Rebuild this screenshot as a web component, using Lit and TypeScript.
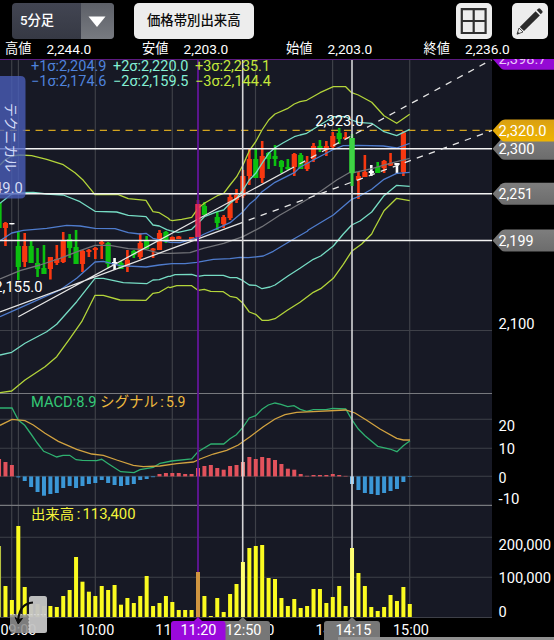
import { LitElement, html, svg, css } from "lit";
import { customElement } from "lit/decorators.js";

const barX = (i: number) => 18.3 + 6.418 * i;

// Line tracks are stored per tile: an origin, then x,y pairs in thirds of a pixel.
type Tile = [number, number, string];
const track = (tiles: Tile[]) =>
  tiles
    .flatMap(([ox, oy, s]) =>
      s.split(" ").map((p) => {
        const [x, y] = p.split(",").map(Number);
        return `${(ox + x / 3).toFixed(1)},${(oy + y / 3).toFixed(1)}`;
      })
    )
    .join(" ");

const BLUE = "#4f7ccd";
const MINT = "#76dcc4";
const LIME = "#b3d43a";

const BANDS: { color: string; tiles: Tile[] }[] = [
  { color: "#737479", tiles: [
    [0, 200, "0,237 60,212 120,195 180,175 240,152 285,136 330,136 385,146 438,149 480,160"],
    [170, 100, "0,460 60,458 100,445 161,430 219,410 276,380 330,345 400,305 450,275 500,240 540,217"],
    [300, 80, "155,279 175,275 215,266 270,250 329,235"]] },
  { color: BLUE, tiles: [
    [0, 200, "0,122 35,99 70,91 140,85 200,76 240,78 285,85 345,86 385,98 420,102 438,100 459,115"],
    [170, 100, "0,427 30,428 65,418 84,412 103,402 142,385 180,368 219,335 238,313 257,297 276,275 315,247 373,218"],
    [300, 80, "0,262 40,240 97,210 130,197 175,196 250,198 290,204 329,190"]] },
  { color: BLUE, tiles: [
    [0, 200, "0,350 90,310 180,270 230,235 285,186 310,184 360,197 438,201 478,195 516,191 555,191"],
    [170, 220, "80,127 130,118 180,116 210,112 235,113 280,108 310,94 370,58 412,34"],
    [300, 80, "25,450 100,405 155,358 175,350 215,328 252,298 290,280 329,277"]] },
  { color: MINT, tiles: [
    [0, 60, "0,430 35,402 55,398 100,397 140,402 190,405 240,425 285,454 350,456 385,466 438,470"],
    [0, 200, "459,75 478,78 500,89"],
    [170, 100, "0,392 25,397 65,388 84,370 103,350 142,335 161,330 180,310 200,295 219,270 238,240 257,220 276,190 296,160 315,143 340,128 373,110"],
    [300, 80, "0,165 20,160 60,135 100,110 137,110 155,120 175,127 215,130 252,155 290,167 329,148"]] },
  { color: MINT, tiles: [
    [0, 200, "0,465 35,457 75,430 140,395 170,373 230,305 285,235 310,235 370,248 440,251 459,240 478,239 505,229"],
    [170, 220, "0,169 15,164 65,163 84,169 103,166 160,166 180,173 200,173 219,182 238,195 257,196 276,206 300,201 315,195 355,167 390,145 430,118 452,108 490,78 520,42"],
    [300, 80, "155,435 180,423 215,396 252,347 290,316 329,319"]] },
  { color: LIME, tiles: [
    [0, 60, "0,315 15,300 35,288 60,285 95,287 140,298 190,314 225,338 250,361 285,404 355,404 385,416 438,421 459,455 478,458 505,475"],
    [170, 100, "0,360 7,362 35,358 65,352 84,325 103,310 142,287 161,280 180,255 200,230 219,195 238,152 257,125 276,90 296,60 315,42 352,26 373,12"],
    [300, 80, "0,65 20,61 60,38 100,20 137,20 155,38 175,45 215,67 252,107 290,130 329,103"]] },
  { color: LIME, tiles: [
    [0, 200, "0,578 35,573 75,540 135,500 170,470 210,415 245,365 285,286 310,286 360,300 438,301 459,280 478,277 505,261"],
    [170, 220, "0,203 20,197 65,197 84,211 103,208 122,214 160,215 180,229 200,233 219,250 238,276 257,283 276,301 295,301 315,296 352,271 390,247 430,217 452,206 490,175 520,133 545,94 575,72 605,42"],
    [300, 80, "222,448 252,392 290,355 329,362"]] },
];

const MACD: Tile[] = [
  [0, 385, "0,69 36,69 55,105 74,121 93,147 112,174 131,199 150,207 170,216 189,211 209,211 228,224 247,226 290,227 305,223 325,236 362,260 402,263 420,254 460,247 480,235 515,228 575,222 594,200"],
  [200, 385, "33,177 71,177 90,161 109,149 128,128 148,99 167,92 186,73 205,60 225,54 243,58 263,65 282,62 301,73 320,79 340,74 378,74 398,70 437,72 455,103 475,132 495,152 533,184 570,192 591,200 610,182 630,167"],
];
const SIGNAL: Tile[] = [
  [0, 385, "0,121 36,103 75,107 100,120 135,145 175,169 230,193 275,207 310,211 350,225 400,241 430,245 480,243 530,236 580,231"],
  [200, 385, "0,222 40,207 80,196 115,180 150,155 190,125 225,102 255,89 290,82 340,80 437,75 465,84 500,106 540,132 590,160 610,165 630,165"],
];

// index, direction (u: up/red, d: down/green, w: unchanged/white), high, low, body top, body bottom
type Candle = [number, string, number, number, number, number];
const CANDLES: Candle[] = [
  [-3, "d", 203, 228, 203, 228], [-2, "u", 222, 246, 223, 228], [-1, "w", 223, 224.3, 223, 224.3],
  [0, "d", 232, 280, 246, 267], [1, "u", 233, 267, 246, 262], [2, "d", 240, 263, 246, 263],
  [3, "d", 248, 277, 263, 269], [4, "d", 245, 274, 268, 274], [5, "u", 257, 279.5, 257, 269],
  [6, "u", 245, 265, 259, 263], [7, "u", 232, 263, 240, 262], [8, "d", 234, 258, 239, 248],
  [9, "d", 230, 264, 247, 264], [10, "u", 250, 272, 251, 264], [11, "u", 249, 257, 250, 252],
  [12, "u", 247, 259, 248, 250], [13, "u", 241, 259, 242, 244], [14, "d", 242, 268, 243, 264],
  [15, "w", 258, 270, 262, 264.5], [16, "d", 261, 269, 263, 269], [17, "u", 250, 272, 260, 267],
  [18, "d", 250, 258, 251, 255], [19, "u", 233, 259, 243, 257], [20, "d", 236, 249, 240, 249],
  [21, "u", 248, 258, 248.5, 250.5], [22, "u", 230, 250, 233, 250], [23, "d", 231, 243, 232, 241],
  [24, "u", 236.5, 240, 237, 240], [25, "u", 236, 239, 236.5, 239], [27, "u", 237, 239.5, 237, 239.5],
  [28, "u", 200, 237, 204, 237], [29, "d", 202, 215, 206, 215], [31, "d", 212, 230, 217, 223],
  [32, "u", 215, 228, 217, 224], [33, "u", 194, 220, 197, 218], [34, "u", 189, 203, 195, 200],
  [35, "u", 170, 198, 176, 196], [36, "u", 149, 185, 159, 176], [37, "d", 149, 178, 159, 178],
  [38, "u", 141, 183, 156, 178], [39, "d", 152, 169, 153, 159], [40, "d", 145, 166, 156, 159],
  [41, "d", 160, 173, 161, 167], [42, "d", 159, 170, 167, 169], [43, "u", 153, 176, 154, 167],
  [44, "d", 153, 169, 155, 169], [45, "u", 156, 171, 162, 169], [46, "u", 143, 162, 146, 159],
  [47, "d", 140, 152, 146, 149], [48, "u", 141, 156, 146, 150], [49, "u", 132, 148, 136, 147],
  [50, "d", 128, 144, 133, 139], [51, "u", 132, 139, 137, 139], [52, "d", 134, 186, 138, 173],
  [53, "u", 172, 199, 176, 180], [54, "u", 155, 177, 172, 177], [55, "w", 165, 176, 171, 173],
  [56, "d", 162, 173, 167, 173], [57, "u", 160, 173, 161, 168], [58, "u", 153, 166, 163, 165.5],
  [59, "w", 163, 174, 163, 165], [60, "u", 131, 176, 132.5, 172],
];
const CANDLE_COLOR: Record<string, string> = { u: "#f83810", d: "#0cc010", w: "#fff" };

const OSC_ZERO = 476.4;
const OSC = [
  459, 462, 465, 477.4, 481, 487, 492, 495.7, 494, 493, 488, 486, 488, 486, 484, 483, 480, 483, 485, 486, 485, 484,
  480, 479, 477.2, 474, 473, 473, 473, 474, 474, 468, 466, 465, 468, 469.7, 466, 465, 462, 457, 459, 457, 458, 460,
  464, 468.7, 469.7, 474, 475.8, 475, 475, 475, 474, 475, 475.9, 484, 490, 493, 494, 495, 493, 491, 489, 482, 477,
];
const VOL_ZERO = 617;
const VOLUME = [
  546, 586, 600, 526, 587, 602, 604, 606, 606, 607, 596, 590, 557, 581.7, 591.7, 596, 586, 590, 585, 604.7, 598, 603,
  596, 576, 606, 603, 596, 602, 610, 610, 610, 572, 596, 616, 598, 612, 594, 584, 562, 548, 546, 545, 578, 579, 598,
  606, 599, 608, 606, 589, 589, 603, 597, 586, 606, 548, 573, 586, 607, 611, 607, 595, 601, 587, 604,
];

const QUOTES = [["高値", "2,244.0"], ["安値", "2,203.0"], ["始値", "2,203.0"], ["終値", "2,236.0"]];

const label = (x: number, y: number, s: string, w: number, cls = "num") =>
  svg`<text class=${cls} x=${x} y=${y} textLength=${w} lengthAdjust="spacingAndGlyphs">${s}</text>`;

const priceTag = (y: number, fill: string) =>
  svg`<path d=${`M492.5 ${y} L501 ${y - 9.5} Q502.5 ${y - 11} 505 ${y - 11} H554 V${y + 11} H505 Q502.5 ${y + 11} 501 ${y + 9.5} Z`} fill=${fill} />`;

const timeTag = (cx: number, l: number, r: number, fill: string) =>
  svg`<path d=${`M${l} 642 V624 Q${l} 621 ${l + 3} 621 H${cx - 4} L${cx} 617 L${cx + 4} 621 H${r - 3} Q${r} 621 ${r} 624 V642 Z`} fill=${fill} />`;

@customElement("app-root")
export class AppRoot extends LitElement {
  static styles = css`
    :host {
      display: flex;
      flex-direction: column;
      width: 554px;
      height: 640px;
      overflow: hidden;
      background: #000;
      color: #fff;
      font-family: Roboto, "Noto Sans CJK JP", sans-serif;
    }
    .toolbar {
      display: flex;
      height: 39px;
      box-sizing: border-box;
      padding: 3px 6.5px 0 11.5px;
    }
    .select {
      display: flex;
      width: 102px;
      height: 35.5px;
      border-radius: 4px;
      overflow: hidden;
      background: linear-gradient(#424552, #363944);
    }
    .select-text {
      flex: 1;
      padding-left: 8.5px;
      font-size: 13.3px;
      line-height: 36px;
      font-weight: 500;
    }
    .select-arrow {
      display: flex;
      width: 33px;
      align-items: center;
      justify-content: center;
      background: linear-gradient(#5d6068, #777a80);
    }
    .button {
      width: 119.5px;
      height: 35.5px;
      margin-left: 20.5px;
      border-radius: 5px;
      background: #ededed;
      color: #0c0c0c;
      text-align: center;
      font-size: 13.4px;
      font-weight: 500;
      line-height: 36px;
      white-space: nowrap;
    }
    .tools {
      display: flex;
      gap: 19.5px;
      margin-left: auto;
    }
    .tool {
      width: 36px;
      height: 35.5px;
      border-radius: 5px;
      background: #ededed;
    }
    .quotes {
      display: grid;
      grid-template-columns: 137px 144px 137.5px 1fr;
      height: 20px;
      padding-left: 5px;
      font-size: 13.7px;
      line-height: 20px;
    }
    .quote {
      display: grid;
      grid-template-columns: 41.5px auto;
    }
    .quote-name {
      font-size: 13.2px;
    }
    .chart {
      display: block;
      width: 554px;
      height: 581px;
    }
    text {
      font-family: Roboto, "Noto Sans CJK JP", sans-serif;
      font-size: 14.6px;
      fill: #fff;
    }
    .small { font-size: 14px; }
    .s1 { fill: #4f83dc; }
    .s2 { fill: #84f0d4; }
    .s3 { fill: #c5e83c; }
    .macd { fill: #35c977; font-size: 14.4px; }
    .signal { fill: #edb93e; font-size: 14.4px; }
    .volume { fill: #f3f33a; font-size: 14.2px; }
    .tab { fill: #d2daf7; font-size: 14.2px; }
    .faded { fill: #d5dcf5; }
    .purple { fill: #e9c6f8; }
  `;

  private toolbar() {
    return html`<div class="toolbar">
      <div class="select">
        <div class="select-text">5分足</div>
        <div class="select-arrow">
          <svg width="18" height="12" viewBox="0 0 18 12"><path d="M.5 1.5H17.5L9 12Z" fill="#fff" /></svg>
        </div>
      </div>
      <div class="button">価格帯別出来高</div>
      <div class="tools">
        <div class="tool">
          <svg width="36" height="36" viewBox="0 0 36 36">
            <path d="M5.8 6.2H29.6V30H5.8ZM17.7 6.2V30M5.8 18H29.6" fill="none" stroke="#303030" stroke-width="2.2" />
          </svg>
        </div>
        <div class="tool">
          <svg width="36" height="36" viewBox="0 0 36 36" fill="#2b2b2b">
            <path d="M23.6 8.2L27.8 12.4L12 28.1L7.8 24Z" />
            <path d="M24.7 7.1L26.2 5.7Q27.2 4.9 28.2 5.7L30.3 7.9Q31 8.8 30.2 9.8L28.8 11.3Z" />
            <path d="M7 25L11 29L5 31.2Z" fill="none" stroke="#2b2b2b" stroke-width=".8" />
            <path d="M5.8 28.7L7.5 30.4L5 31.2Z" />
          </svg>
        </div>
      </div>
    </div>`;
  }

  private grid() {
    const xs = [11.7, 18.4, 95.3, 172.3, 255.5, 332.6, 409.7];
    const ys = [330.5, 419.3, 448.3, 476.3, 537.3, 577.3, 617.5];
    return svg`
      <rect x="0" y="59" width="492" height="559" fill="#171925" />
      ${xs.map((x) => svg`<path d=${`M${x} 59V617`} stroke="#3e4048" stroke-width="1.2" />`)}
      ${ys.map((y) => svg`<path d=${`M0 ${y}H492`} stroke="#3e4048" stroke-width="1.1" />`)}
      <path d="M0 393.5H492M0 505.4H492" stroke="#77797e" stroke-width="1.2" />`;
  }

  private prices() {
    return svg`
      <path d="M0 130.4H492" stroke="#d3a41f" stroke-width="1.2" stroke-dasharray="7.2 5.65" stroke-dashoffset="3" />
      ${CANDLES.map(([i, k, h, l, t, b]) => {
        const x = barX(i);
        const c = i === 28 ? "#ee2b4d" : CANDLE_COLOR[k];
        return svg`<rect x=${x - 1.3} y=${h} width="2.6" height=${l - h} fill=${c} />
          <rect x=${x - 2.6} y=${t} width="5.2" height=${b - t} fill=${c} />`;
      })}
      ${BANDS.map((b) => svg`<polyline points=${track(b.tiles)} fill="none" stroke=${b.color} stroke-width="1.3" stroke-linejoin="round" />`)}
      <path d="M0 148.7H492M0 193.7H492M0 240.4H492" stroke="#f2f2f2" stroke-width="1.5" />
      <path d="M18.3 316.7L294 167M0 312L242.7 222.3" stroke="#e6e6e6" stroke-width="1.3" fill="none" />
      <path d="M294 167L492 59.5M242.7 222.3L492 130.5" stroke="#e6e6e6" stroke-width="1.3" fill="none" stroke-dasharray="6.5 6.3" stroke-dashoffset="6.5" />`;
  }

  private bars() {
    return svg`
      ${OSC.map((y, n) => {
        const i = n - 3;
        const up = y < OSC_ZERO;
        const c = i === 52 ? "#7cc4f4" : i === 35 ? "#ee8580" : up ? "#e2525c" : "#3b97d6";
        return svg`<rect x=${barX(i) - 2} y=${Math.min(y, OSC_ZERO)} width="4" height=${Math.abs(y - OSC_ZERO)} fill=${c} />`;
      })}
      <polyline points=${track(MACD)} fill="none" stroke="#2fb070" stroke-width="1.3" />
      <polyline points=${track(SIGNAL)} fill="none" stroke="#d3a340" stroke-width="1.3" />`;
  }

  private volume() {
    return svg`${VOLUME.map((y, n) => {
      const i = n - 3;
      const c = i === 28 ? "#cf9440" : i === 35 || i === 52 ? "#ffff72" : i === -3 ? "#b6c240" : "#fbfb20";
      return svg`<rect x=${barX(i) - 2} y=${y} width="4" height=${VOL_ZERO - y} fill=${c} />`;
    })}`;
  }

  render() {
    return html`
      ${this.toolbar()}
      <div class="quotes">
        ${QUOTES.map(([n, v]) => html`<div class="quote"><span class="quote-name">${n}</span><span>${v}</span></div>`)}
      </div>
      <svg class="chart" viewBox="0 59 554 581">
        <defs>
          <linearGradient id="gray" x1="0" x2="0" y1="0" y2="1"><stop offset="0" stop-color="#7e7e7e" /><stop offset="1" stop-color="#6c6c6c" /></linearGradient>
          <linearGradient id="gold" x1="0" x2="0" y1="0" y2="1"><stop offset="0" stop-color="#d9a013" /><stop offset="1" stop-color="#efb400" /></linearGradient>
        </defs>
        ${this.grid()} ${this.prices()} ${this.bars()}
        <path d="M242.7 59V617M352 59V617" stroke="#d4d4d6" stroke-width="1.6" />
        <path d="M198 59V617" stroke="#63169a" stroke-width="1.8" />
        ${this.volume()}
        <rect x="195.4" y="204" width="5.2" height="33" fill="#e62a55" opacity=".75" />
        <rect x="349.4" y="138" width="5.2" height="35" fill="#3fd445" />
        <rect x="350.7" y="173" width="2.6" height="13" fill="#3fd445" />
        <path d="M0 59.3H492" stroke="#5d1a80" stroke-width="1.2" />

        ${label(31, 71.4, "+1σ:2,204.9", 75.5, "small s1")} ${label(113, 71.4, "+2σ:2,220.0", 75.5, "small s2")}
        ${label(195, 71.4, "+3σ:2,235.1", 75, "small s3")} ${label(31, 85.7, "−1σ:2,174.6", 75.5, "small s1")}
        ${label(113, 85.7, "−2σ:2,159.5", 75.5, "small s2")} ${label(195, 85.7, "−3σ:2,144.4", 76, "small s3")}
        ${label(315.3, 126.3, "2,323.0", 48.2)} ${label(-5.7, 292, "2,155.0", 48.2)}
        ${label(31, 407, "MACD:8.9", 65.5, "macd")} ${label(100, 407, "シグナル", 58, "signal")}
        ${label(160, 407, ":", 4, "signal")} ${label(166, 407, "5.9", 19.5, "signal")}
        ${label(31, 518.6, "出来高", 43, "volume")} ${label(76.5, 518.6, ":", 4, "volume")}
        ${label(82.5, 518.6, "113,400", 53, "volume")}

        <path d="M0 76H20.5Q25.5 76 25.5 81V193.5Q25.5 198.5 20.5 198.5H0Z" fill="#4a5fbb" opacity=".78" />
        ${label(-25.4, 192.7, "2,249.0", 48.2, "faded")}
        <g transform="translate(5.8 103) rotate(90)"><text class="tab" x="0" y="0" textLength="69" lengthAdjust="spacingAndGlyphs">テクニカル</text></g>

        ${priceTag(58.7, "#9409d4")} ${label(498.5, 64, "2,398.7", 48, "purple")}
        <rect x="492" y="56" width="62" height="3" fill="#000" />
        ${priceTag(148.7, "url(#gray)")} ${priceTag(130.4, "url(#gold)")} ${priceTag(193.7, "url(#gray)")} ${priceTag(240.4, "url(#gray)")}
        ${label(498.5, 136, "2,320.0", 48)} ${label(498.5, 154, "2,300", 36)} ${label(498.5, 199, "2,251", 34.5)}
        ${label(498.5, 246, "2,199", 35)} ${label(498.5, 329, "2,100", 36)}
        ${label(498.5, 431, "20", 16.5)} ${label(498.5, 454, "10", 16.5)} ${label(498.5, 482.5, "0", 8)} ${label(498.5, 504, "-10", 21)}
        ${label(498.5, 549.6, "200,000", 52.5)} ${label(498.5, 582.6, "100,000", 52.5)} ${label(498.5, 617, "0", 8.2)}

        ${label(0.5, 634.8, "09:00", 36)} ${label(78.3, 634.8, "10:00", 36)} ${label(155.3, 634.8, "11:00", 36)}
        ${label(238.5, 634.8, "13:00", 36)} ${label(315.5, 634.8, "14:00", 36)} ${label(393, 634.8, "15:00", 36)}
        ${timeTag(242.7, 215, 270, "#777")} ${label(225.5, 634.8, "12:50", 36)}
        ${timeTag(198, 171, 225.5, "#9a09dc")} ${label(180.5, 634.8, "11:20", 36)}
        ${timeTag(352, 324, 380, "#777")}
        <rect x="338" y="637" width="216" height="3" fill="#909090" />
        ${label(335.5, 634.8, "14:15", 36)}

        <path d="M10 614.5H29V633H13Q10 633 10 630Z" fill="#8e8e8e" opacity=".88" />
        <path d="M29 598.5Q29 596 31.5 596H44.5Q47 596 47 598.5V630.5Q47 633 44.5 633H29Z" fill="#c4c4c4" opacity=".96" />
        <path d="M10 614.7H47M29 614.5V633" stroke="#dadada" stroke-width="1" stroke-dasharray="2 1.4" />
        <path d="M33 602.5Q19.5 603.5 18.2 620" fill="none" stroke="#0a0a0a" stroke-width="2.2" />
        <path d="M15.2 617.5L18.2 624L22.5 618.4L18.5 619.6Z" fill="#0a0a0a" stroke="#0a0a0a" stroke-width="1" />
      </svg>
    `;
  }
}
